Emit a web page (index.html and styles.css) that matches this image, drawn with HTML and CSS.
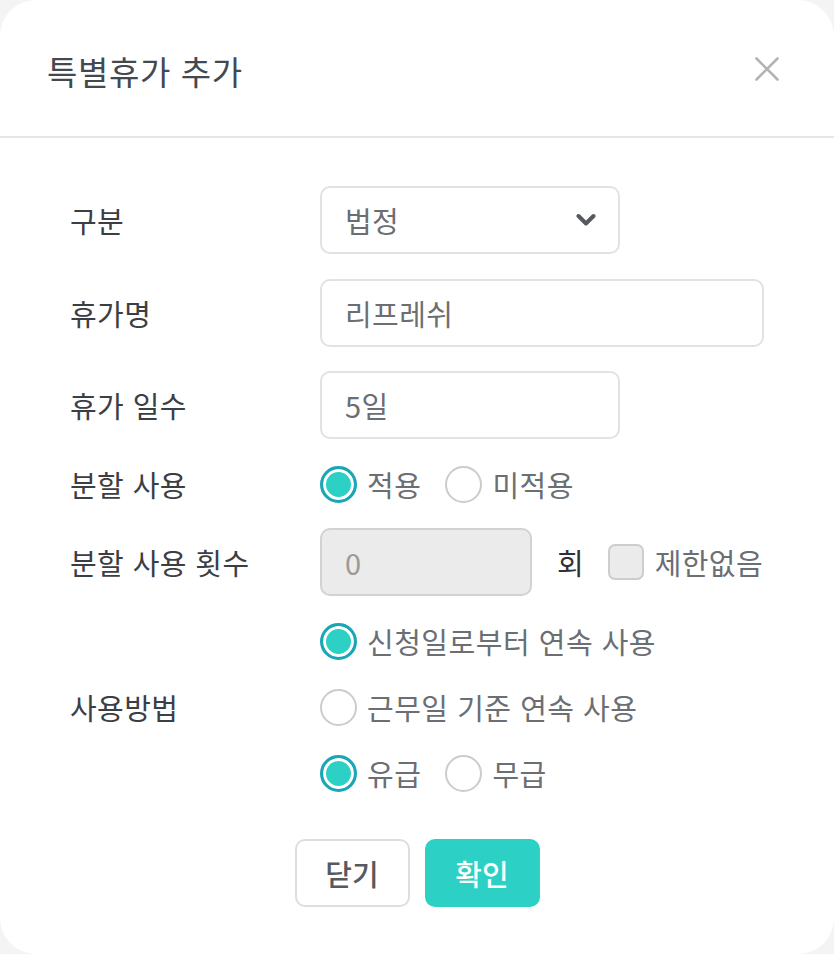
FILE: index.html
```html
<!DOCTYPE html>
<html lang="ko">
<head>
<meta charset="utf-8">
<link rel="stylesheet" href="styles.css">
</head>
<body>
<div class="modal">
  <div class="header">
    <h1 class="title">특별휴가 추가</h1>
    <button class="close" aria-label="닫기">
      <svg width="24" height="24" viewBox="0 0 24 24"><path d="M1.5 1.5 L22.5 22.5 M22.5 1.5 L1.5 22.5" stroke="#b3b3b3" stroke-width="2.6" stroke-linecap="round" fill="none"/></svg>
    </button>
  </div>
  <div class="body">
    <div class="row r1">
      <div class="label">구분</div>
      <div class="field select w300">
        <span class="value">법정</span>
        <svg class="chev" width="20" height="14" viewBox="0 0 20 14"><path d="M2.5 3 L10 10.5 L17.5 3" stroke="#55585d" stroke-width="4" stroke-linecap="round" stroke-linejoin="round" fill="none"/></svg>
      </div>
    </div>
    <div class="row r2">
      <div class="label">휴가명</div>
      <div class="field w444"><span class="value">리프레쉬</span></div>
    </div>
    <div class="row r3">
      <div class="label">휴가 일수</div>
      <div class="field w300"><span class="value">5일</span></div>
    </div>
    <div class="row r4">
      <div class="label">분할 사용</div>
      <div class="options">
        <label class="opt"><span class="radio on"></span><span>적용</span></label>
        <label class="opt"><span class="radio"></span><span>미적용</span></label>
      </div>
    </div>
    <div class="row r5">
      <div class="label">분할 사용 횟수</div>
      <div class="field w212 disabled"><span class="value">0</span></div>
      <span class="unit">회</span>
      <label class="check"><span class="box"></span><span>제한없음</span></label>
    </div>
    <div class="row r6">
      <div class="label">사용방법</div>
      <div class="stack">
        <label class="opt"><span class="radio on"></span><span>신청일로부터 연속 사용</span></label>
        <label class="opt"><span class="radio"></span><span>근무일 기준 연속 사용</span></label>
        <div class="options">
          <label class="opt"><span class="radio on"></span><span>유급</span></label>
          <label class="opt"><span class="radio"></span><span>무급</span></label>
        </div>
      </div>
    </div>
    <div class="buttons">
      <button class="btn ghost">닫기</button>
      <button class="btn primary">확인</button>
    </div>
  </div>
</div>
</body>
</html>
```

FILE: styles.css
```css
* { box-sizing: border-box; }
html, body { margin: 0; padding: 0; }
body {
  background: #f4f4f4;
  font-family: "Noto Sans CJK KR", "Noto Sans", sans-serif;
  width: 834px;
  height: 954px;
  overflow: hidden;
}
.modal {
  width: 834px;
  height: 954px;
  background: #ffffff;
  border-radius: 36px;
  display: flex;
  flex-direction: column;
}
.header {
  height: 138px;
  border-bottom: 2px solid #e6e6e6;
  display: flex;
  align-items: center;
  justify-content: space-between;
  padding: 6px 55px 0 47px;
}
.title {
  margin: 0;
  font-size: 33px;
  font-weight: 400;
  color: #44484f;
  letter-spacing: 0.6px;
}
.close {
  border: 0;
  background: none;
  padding: 0;
  width: 24px;
  height: 24px;
  display: flex;
  margin-top: -4px;
}
.body {
  flex: 1;
  padding: 48px 70px 0 70px;
  display: flex;
  flex-direction: column;
}
.row {
  display: flex;
  align-items: center;
}
.r2 { margin-top: 25px; }
.r3 { margin-top: 24px; }
.r4 { margin-top: 25px; height: 40px; }
.r5 { margin-top: 24px; }
.r6 { margin-top: 25px; }
.label {
  width: 250px;
  flex: none;
  font-size: 29px;
  letter-spacing: 0.4px;
  color: #3b3e44;
  line-height: 1;
}
.field {
  height: 68px;
  border: 2px solid #e2e2e2;
  border-radius: 10px;
  background: #fff;
  display: flex;
  align-items: center;
  padding: 0 22px 0 23px;
  font-size: 29px;
  letter-spacing: 0.4px;
  color: #6b6e73;
}
.w300 { width: 300px; }
.w444 { width: 444px; }
.w212 { width: 212px; }
.select { justify-content: space-between; }
.disabled {
  background: #ebebeb;
  border-color: #d2d2d2;
  color: #9a9a9a;
}
.unit {
  margin-left: 25px;
  font-size: 29px;
  color: #2f3136;
}
.check {
  margin-left: 24px;
  display: flex;
  align-items: center;
  gap: 11px;
  font-size: 29px;
  letter-spacing: 0.4px;
  color: #6b6e73;
}
.box {
  width: 36px;
  height: 36px;
  border: 2px solid #cdcdcd;
  border-radius: 7px;
  background: #ebebeb;
}
.options {
  display: flex;
  align-items: center;
  gap: 24px;
}
.stack {
  display: flex;
  flex-direction: column;
  gap: 26px;
}
.opt {
  display: flex;
  align-items: center;
  gap: 10px;
  font-size: 29px;
  letter-spacing: 0.5px;
  color: #6b6e73;
  height: 40px;
}
.radio {
  width: 37px;
  height: 37px;
  border-radius: 50%;
  border: 2px solid #cccccc;
  background: #fff;
  flex: none;
}
.radio.on {
  border: 3px solid #1ba6b7;
  background: #2dd0c5;
  box-shadow: inset 0 0 0 3px #ffffff;
}
.buttons {
  margin-top: 46px;
  display: flex;
  justify-content: center;
  gap: 15px;
}
.btn {
  width: 115px;
  height: 68px;
  border-radius: 10px;
  font-family: "Noto Sans CJK KR", "Noto Sans", sans-serif;
  font-size: 29px;
  font-weight: 500;
  padding: 0;
}
.ghost {
  background: #fff;
  border: 2px solid #dedede;
  color: #56595e;
}
.primary {
  background: #2dd0c5;
  border: 0;
  color: #ffffff;
}
```
